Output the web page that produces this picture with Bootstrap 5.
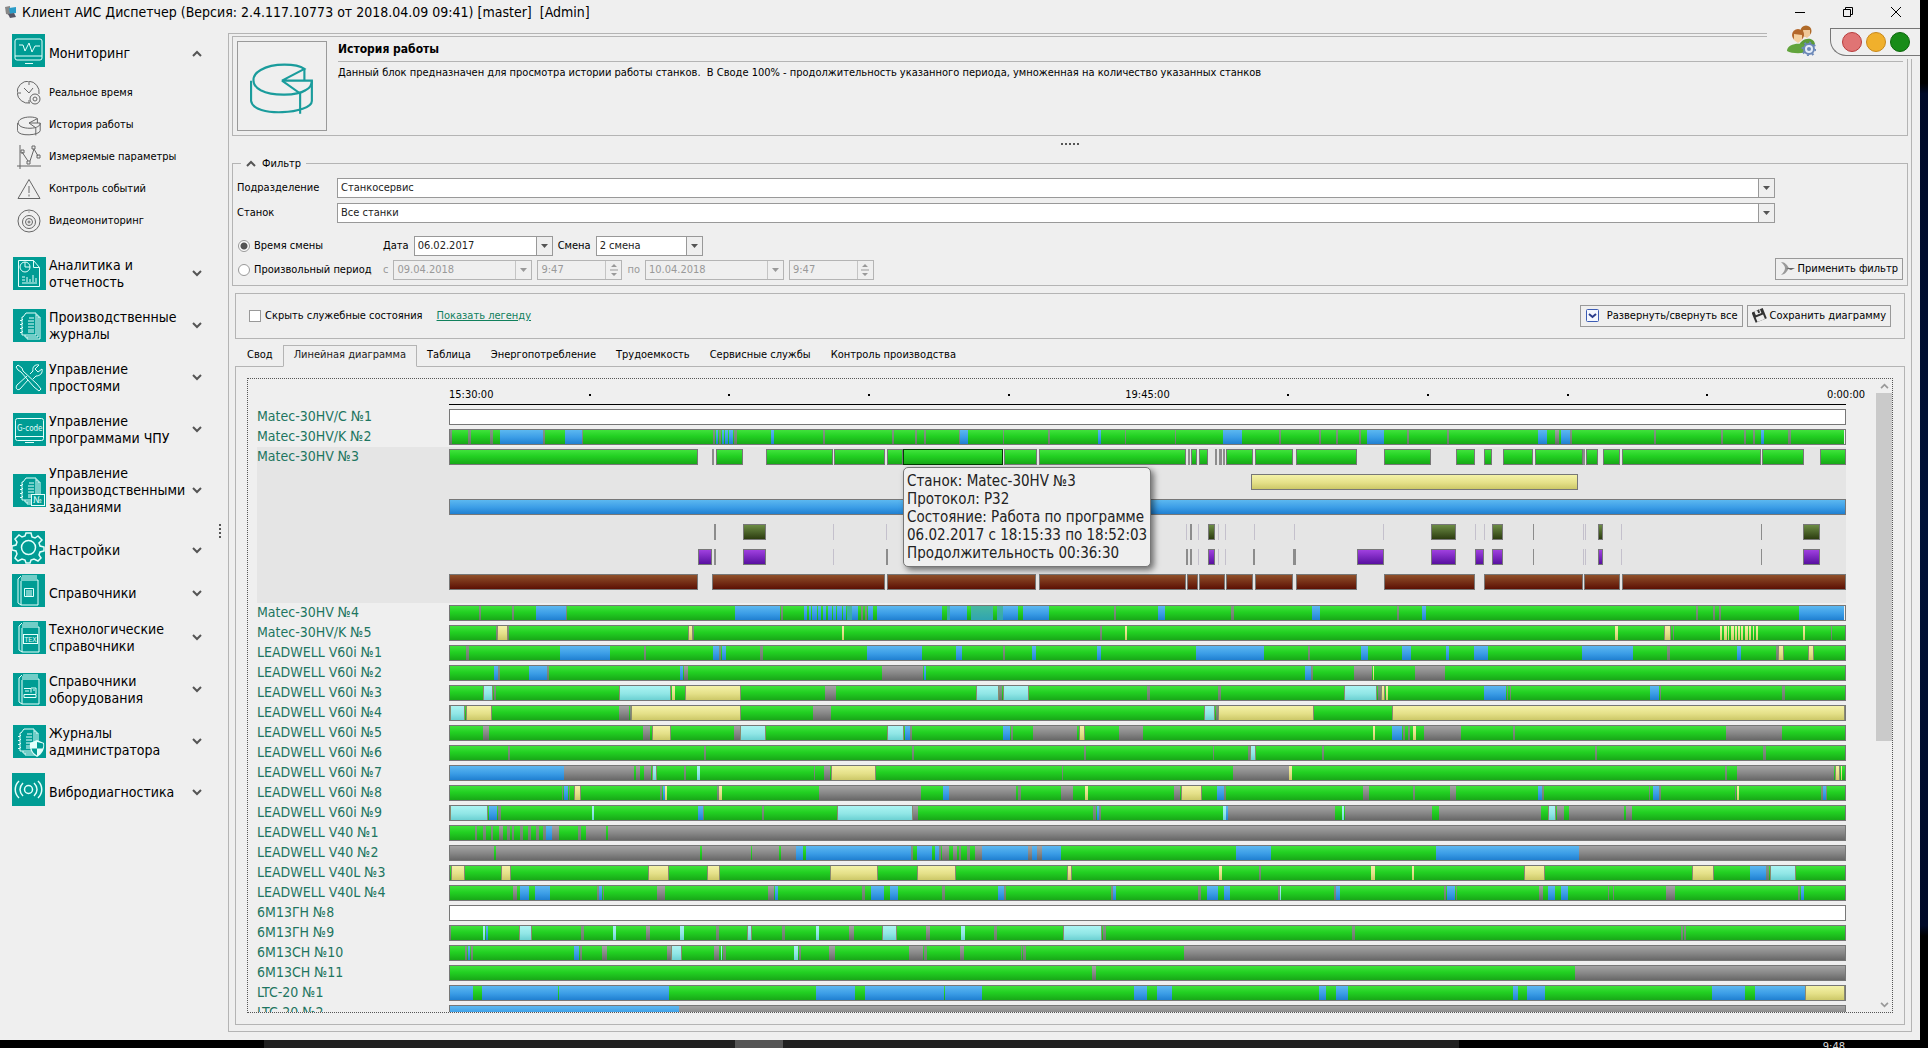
<!DOCTYPE html>
<html lang="ru">
<head>
<meta charset="utf-8">
<meta name="viewport" content="width=device-width, initial-scale=1">
<title>Клиент АИС Диспетчер</title>
<link href="https://cdn.jsdelivr.net/npm/bootstrap@5.3.0/dist/css/bootstrap.min.css" rel="stylesheet">
<style>
  body { font: 11px/14px "DejaVu Sans Condensed", "Noto Sans", sans-serif; color: #000; background: #000; }
  .desk { background: linear-gradient(#000 0 8%, #000a28 9%, #001238 50%, #000a28 89%, #000 90%); padding-right: 8px; }
  .win { background: #efefef; }
  .titlebar { height: 24px; padding: 0 16px 0 4px; font-size: 14px; }
  .titlebar button { width: 16px; height: 16px; border: 0; background: none; padding: 0; }
  .titlebar svg, .ico svg, .sub svg { display: block; width: 100%; height: 100%; }
  .line { fill: none; stroke: currentColor; }

  .side { width: 228px; padding: 5px 0 0 12px; }
  .side a, .side button { color: #000; text-decoration: none; }
  .sec { min-height: 52px; width: 198px; border: 0; background: none; padding: 0 8px 0 1px; text-align: left; font-size: 14px; line-height: 17px; gap: 3px; }
  .sec-one { min-height: 43px; padding-left: 0; gap: 4px; }
  .sec-one .cap, .sec-one .chev { padding-top: 7px; }
  .sec-three { min-height: 70px; }
  .ico { width: 33px; height: 33px; background: #009c94; color: #e4fffb; flex: none; }
  .cap { flex: 1; white-space: nowrap; }
  .chev { width: 10px; color: #555; }
  .chev svg { width: 10px; height: 7px; display: block; }
  .subs { padding: 5px 0 11px 5px; }
  .sub { height: 32px; gap: 8px; }
  .sub span { width: 24px; height: 24px; color: #666; }

  .main { border: 1px solid #b4b4b4; margin: 9px 8px 8px 0; padding: 2px 3px 6px; }
  .box { border: 1px solid #b4b4b4; }
  .intro { padding: 4px; height: 100px; gap: 11px; }
  .thumb { width: 90px; height: 90px; color: #1a9c9c; border-color: #9a9a9a; padding: 12px; }
  .intro h1 { font-size: 12px; line-height: 16px; font-weight: 700; margin: 0; padding-bottom: 4px; border-bottom: 1px solid #b4b4b4; }
  .grip { height: 22px; color: #555; padding-top: 7px; gap: 2px; }
  .grip i { width: 2px; height: 2px; background: #555; }
  fieldset.filter { border: 1px solid #b4b4b4; padding: 8px 4px 5px; margin: 0; }
  .filter legend { float: none; width: auto; font-size: 11px; line-height: 12px; margin: 0 0 0 4px; padding: 0 5px; gap: 6px; }
  .wide { margin: 0 128px 5px 0; }
  .wide label { width: 100px; }
  .field { height: 20px; border: 1px solid #999; background: #fff; }
  .field select, .field input { appearance: none; border: 0; background: none; padding: 0 3px; width: 100%; min-width: 0; color: #222; font: inherit; outline: 0; opacity: 1; }
  .drop { width: 16px; flex: none; border-left: 1px solid #999; background: #efefef; color: #555; }
  .drop svg { width: 7px; height: 4px; }
  .drop .updown { width: 8px; height: 14px; }
  .off .field { background: #efefef; border-color: #b4b4b4; }
  .off .field input, .off .txt, .off .drop { color: #999; }
  .off .drop { border-color: #c4c4c4; }
  .f-date { width: 139px; } .f-time { width: 85px; } .f-shift { width: 107px; }
  .crit { gap: 5px; height: 20px; padding-left: 1px; }
  .mode { width: 140px; gap: 4px; white-space: nowrap; }
  .form-check-input.rd, .form-check-input.ck { margin: 0; width: 12px; height: 12px; float: none; border-color: #999; box-shadow: none; flex: none; }
  .form-check-input.rd:checked { background: radial-gradient(#555 0 3px, #fff 4px); border-color: #999; }
  .form-check-input.ck { border-radius: 0; }
  .btn.tool { height: 22px; padding: 0 4px; border: 1px solid #999; border-radius: 0; font-size: 11px; line-height: 14px; color: #000; gap: 3px; white-space: nowrap; }
  .tool svg { width: 15px; height: 15px; }
  .bar-tools { margin: 7px 3px 6px; padding: 0 13px; height: 47px; }
  .legend-link { color: #10805c; margin-left: 14px; }
  .pages { margin: 0 3px; }
  .nav-tabs.pg { border-color: #b4b4b4; padding-left: 2px; }
  .pg .nav-link { padding: 2px 9px 4px; border-radius: 0; color: #000; line-height: 14px; white-space: nowrap; }
  .pg .nav-link.active { background: #efefef; border-color: #b4b4b4 #b4b4b4 #efefef; color: #222; padding: 2px 10px 4px; }
  .page { border: 1px solid #b4b4b4; border-top: 0; padding: 11px; }
  .plot { border: 1px dotted #555; overflow: hidden; }
  .rows { margin-right: -22px; padding: 0 52px 0 9px; overflow: hidden; }
  .axis { height: 26px; margin: 0 0 2px 192px; border-bottom: 1px solid #000; }
  .axis span { position: absolute; top: 9px; }
  .axis .tick { width: 2px; height: 2px; top: 15px; background: #000; }
  .axis .mid, .axis .fin { transform: translateX(-50%); }
  .mrow { height: 20px; }
  .mrow.open { height: 156px; background: #e5e5e5; }
  .mname { width: 192px; flex: none; font-size: 14px; line-height: 18px; color: #1d7560; white-space: nowrap; }
  .strip { height: 16px; margin: 2px 0 9px; display: flex; }
  .full { border: 1px solid #777; }
  .strip i { flex: none; }
  .parts i:not(.none) { border: 1px solid #777; }
  .g { background: linear-gradient(#40e23c, #22d022 45%, #18a818); }
  .b { background: linear-gradient(#5cb8f0, #3a9ce6 55%, #2080d0); }
  .x { background: linear-gradient(#a4a4a4, #888 50%, #686868); }
  .y { background: linear-gradient(#f4f2a8, #e4e088 55%, #ccc868); }
  .c { background: linear-gradient(#acf4f2, #90e6e6 55%, #6cd0d2); }
  .t { background: linear-gradient(#48b8a0, #2fa4b0); }
  .w { background: #fff; }
  .o { background: linear-gradient(#6c8c44, #2c3c10); }
  .p { background: linear-gradient(#a040e0, #5810a0); }
  .n { background: linear-gradient(#90502a, #5c1004); }
  .full .edged { box-shadow: inset 1px 0 #8a8a70, inset -1px 0 #8a8a70; }
  .full .x.slim { background: linear-gradient(#869886, #7c887c 50%, #6a746a); }
  .parts i.sel { border-color: #002800; outline: 1px solid #033803; outline-offset: -1px; }
  .parts i.v { border: 0; background: #8c8c8c; }
  .parts i.f { border: 0; background: #c4c0cc; }
  .tipbox { position: absolute; left: 32.5%; top: 20px; z-index: 2; padding: 4px 3px; font-size: 15px; line-height: 18px; color: #222; background: #efefef; border: 1px solid #777; border-radius: 5px; box-shadow: 3px 3px 6px #0008; white-space: nowrap; }
  .scroll { width: 16px; flex: none; color: #999; }
  .scroll .thumbbar { height: 348px; background: #cacaca; }
  .scroll svg { width: 9px; height: 6px; }
  .corner { position: absolute; top: 25px; right: 0; width: 153px; height: 34px; background: #efefef; padding-left: 20px; }
  .corner .users { width: 29px; height: 31px; }
  .lamps { width: 90px; height: 28px; margin-top: 3px; border: 1px solid #777; border-right: 0; border-bottom-left-radius: 16px; gap: 4px; padding-left: 11px; }
  .lamps i { width: 20px; height: 20px; border-radius: 50%; border: 1px solid; }
  .lamps .stop { background: #e07474; border-color: #b83c3c; }
  .lamps .wait { background: #f0b02c; border-color: #c8881c; }
  .lamps .go { background: #188c18; border-color: #0c680c; }
  .vgrip { position: absolute; left: 219px; top: 524px; gap: 2px; }
  .vgrip i { width: 2px; height: 2px; background: #555; }
  .taskbar { height: 8px; overflow: hidden; background: linear-gradient(90deg, #000 0 264px, #202020 264px 735px, #555 735px 783px, #202020 783px 1459px, #000 1459px); color: #ddd; line-height: 14px; padding: 0 83px 0 0; }
  .minh { min-height: 0; min-width: 0; }
  .wincontrols { gap: 32px; }
</style>
</head>
<body class="vh-100 d-flex flex-column overflow-hidden">
<svg class="d-none" xmlns="http://www.w3.org/2000/svg">
  <symbol id="dn" viewBox="0 0 10 7"><path d="M1 1l4 4 4-4" fill="none" stroke="currentColor" stroke-width="2"/></symbol>
  <symbol id="up" viewBox="0 0 10 7"><path d="M1 6l4-4 4 4" fill="none" stroke="currentColor" stroke-width="2"/></symbol>
  <symbol id="tri" viewBox="0 0 7 4"><path d="M0 0h7L3.500 4z" fill="currentColor"/></symbol>
  <symbol id="updn" viewBox="0 0 8 14"><path d="M4 1l3 3H1zM4 13l3-3H1z" fill="currentColor"/><path d="M0 7h8" stroke="currentColor"/></symbol>
  <symbol id="pie" viewBox="0 0 60 60"><g class="line"><path d="M51 14C44 9 22 8 10 15c-9 5-9 14 0 19 12 6 34 5 42 0 4-2 6-5 6-9H30z"/><path d="M51 14v11M58 25v19c0 12-55 16-57 0V25M30 25l17 12v19"/></g></symbol>
  <symbol id="doc" viewBox="0 0 33 33"><g class="line"><path d="M10 8l3-4h10v22H9V8zM23 6h2v22H12v-2M25 8h2v22H14v-2M16 9h5M15 12h6M15 15h6M15 18h6M15 21h6M15 23h6"/><path d="M7 11l1 1 2-2M7 15l1 1 2-2M7 19l1 1 2-2M7 23l1 1 2-2"/></g></symbol>
  <symbol id="book" viewBox="0 0 33 33"><g class="line"><path d="M10 2h15M9 4h16M9 6h17v25H9l-3-2V5l3-3M9 7v24"/></g></symbol>
</svg>

<div class="desk flex-grow-1 d-flex minh">
<div class="win flex-grow-1 d-flex flex-column position-relative">
  <header class="titlebar d-flex align-items-center">
    <svg style="width:14px;height:14px" viewBox="0 0 14 14" class="me-1"><path d="M1 2l5-1v9l-4-1z" fill="#888"/><path d="M5 3l7-1v6l-6 1z" fill="#2a9cc8"/><path d="M4 9l6-1 2 4-6 1z" fill="#556"/></svg>
    <span class="me-auto">Клиент АИС Диспетчер (Версия: 2.4.117.10773 от 2018.04.09 09:41) [master]&nbsp; [Admin]</span>
    <div class="d-flex wincontrols">
      <button aria-label="Свернуть"><svg viewBox="0 0 16 16"><path class="line" d="M3 8.500h10"/></svg></button>
      <button aria-label="Развернуть"><svg viewBox="0 0 16 16"><path class="line" d="M3.500 5.500h7v7h-7zM5.500 5V3.500h7v7H11"/></svg></button>
      <button aria-label="Закрыть"><svg viewBox="0 0 16 16"><path class="line" d="M3 3l10 10M13 3L3 13"/></svg></button>
    </div>
  </header>

  <div class="d-flex flex-grow-1 minh">
    <nav class="side flex-shrink-0">
      <button class="sec sec-one d-flex align-items-center"><span class="ico"><svg viewBox="0 0 33 33"><g class="line"><rect x="3" y="5" width="27" height="21" rx="2"/><path d="M3 22h27M13 29.500h8M7 11h4l2 6 4-8 3 9 3-6h5"/></g></svg></span><span class="cap">Мониторинг</span><span class="chev"><svg><use href="#up"/></svg></span></button>
      <div class="subs">
        <a href="#" class="sub d-flex align-items-center"><span><svg viewBox="0 0 24 24"><g class="line"><path d="M13 22A11 11 0 1 1 22 13"/><path d="M7 7l5 5 4-5M12 1v3M1 12h3M12 19v3"/><circle cx="18" cy="18" r="5"/><circle cx="18" cy="18" r="2"/></g></svg></span>Реальное время</a>
        <a href="#" class="sub d-flex align-items-center"><span><svg stroke-width="2.500"><use href="#pie"/></svg></span>История работы</a>
        <a href="#" class="sub d-flex align-items-center"><span><svg viewBox="0 0 24 24"><g class="line"><path d="M3 0v24M0 21h24M5 7l6 9M13 16l4-12 4 7"/><path d="M4 5h3v3H4zM10 16h3v3h-3zM15 1h3v3h-3zM20 10h3v3h-3z"/></g></svg></span>Измеряемые параметры</a>
        <a href="#" class="sub d-flex align-items-center"><span><svg viewBox="0 0 24 24"><g class="line"><path d="M12 2.500L23 21.500H1zM12 9v7M12 17.500v2"/></g></svg></span>Контроль событий</a>
        <a href="#" class="sub d-flex align-items-center"><span><svg viewBox="0 0 24 24"><g class="line"><circle cx="12" cy="12" r="11"/><circle cx="12" cy="13" r="6.500"/><circle cx="12" cy="13" r="3.500"/><circle cx="12" cy="13" r="1"/><path d="M11.500 3h1"/></g></svg></span>Видеомониторинг</a>
      </div>
      <button class="sec d-flex align-items-center"><span class="ico"><svg viewBox="0 0 33 33"><g class="line"><path d="M5.500 3.500h15l6 7v19h-21zM20.500 3.500v7h6"/><circle cx="12" cy="10" r="5"/><path d="M12 5v5h5M9 26h15M9 23h3M9 20h3M14 25v-5M17 25v-3M20 25v-7M23 25v-4"/></g></svg></span><span class="cap">Аналитика и<br>отчетность</span><span class="chev"><svg><use href="#dn"/></svg></span></button>
      <button class="sec d-flex align-items-center"><span class="ico"><svg><use href="#doc"/></svg></span><span class="cap">Производственные<br>журналы</span><span class="chev"><svg><use href="#dn"/></svg></span></button>
      <button class="sec d-flex align-items-center"><span class="ico"><svg viewBox="0 0 33 33"><g class="line"><path d="M5 4l4 3 1 3 14 13 4 5-2 2-5-4L8 11 5 9 3 6zM15 19l-8 9c-3 2-5-1-3-4l10-9M17 13l3-3c-1-4 2-7 6-6l-4 4 3 3 4-3c1 4-2 7-6 7l-3 3"/></g></svg></span><span class="cap">Управление<br>простоями</span><span class="chev"><svg><use href="#dn"/></svg></span></button>
      <button class="sec d-flex align-items-center"><span class="ico"><svg viewBox="0 0 33 33"><g class="line"><rect x="2.500" y="5.500" width="28" height="22" rx="2"/><path d="M2 23.500h29M12 29.500h9"/></g><text x="4" y="18" fill="currentColor" style="font-size:8px">G-code</text></svg></span><span class="cap">Управление<br>программами ЧПУ</span><span class="chev"><svg><use href="#dn"/></svg></span></button>
      <button class="sec sec-three d-flex align-items-center"><span class="ico"><svg viewBox="0 0 33 33"><use href="#doc"/><rect x="18.500" y="20.500" width="13" height="11" fill="#009c94" stroke="currentColor"/><text x="20" y="29" fill="currentColor" style="font-size:9px">№</text></svg></span><span class="cap">Управление<br>производственными<br>заданиями</span><span class="chev"><svg><use href="#dn"/></svg></span></button>
      <button class="sec sec-one d-flex align-items-center"><span class="ico"><svg viewBox="0 0 33 33"><g class="line" stroke-width="1.500"><circle cx="16.500" cy="16.500" r="7"/><path d="M14 2h5l1 4 3 1 3-2 4 4-3 3 1 3 4 1v4l-4 1-1 3 2 3-3 3-4-2-3 1-1 3h-4l-1-3-3-1-4 2-3-3 2-4-1-3-4-1v-4l4-1 1-3-2-3 4-4 3 2 3-1z"/></g></svg></span><span class="cap">Настройки</span><span class="chev"><svg><use href="#dn"/></svg></span></button>
      <button class="sec sec-one d-flex align-items-center"><span class="ico"><svg viewBox="0 0 33 33"><use href="#book"/><path class="line" d="M12.500 14.500h9v8h-9zM14 17h6M14 19h6M14 21h6"/></svg></span><span class="cap">Справочники</span><span class="chev"><svg><use href="#dn"/></svg></span></button>
      <button class="sec d-flex align-items-center"><span class="ico"><svg viewBox="0 0 33 33"><use href="#book"/><rect class="line" x="10.500" y="13.500" width="14" height="9"/><text x="11.500" y="21" fill="currentColor" style="font-size:7px">TEX</text></svg></span><span class="cap">Технологические<br>справочники</span><span class="chev"><svg><use href="#dn"/></svg></span></button>
      <button class="sec d-flex align-items-center"><span class="ico"><svg viewBox="0 0 33 33"><use href="#book"/><path class="line" d="M11 15.500h7v4M12 18h4M11 24.500h12v-3H11zM18 15h5v6M20 17h2"/></svg></span><span class="cap">Справочники<br>оборудования</span><span class="chev"><svg><use href="#dn"/></svg></span></button>
      <button class="sec d-flex align-items-center"><span class="ico"><svg viewBox="0 0 33 33"><svg x="-2" width="33" height="33"><use href="#doc"/></svg><path d="M24 15l7 3c1 6-2 11-7 14-5-3-8-8-7-14z" fill="currentColor"/><path d="M24 17v6.500h5.500c1-2 1-3 .5-5zM24 23.500v7c-3-2-5-4-5.500-7z" fill="#009c94"/></svg></span><span class="cap">Журналы<br>администратора</span><span class="chev"><svg><use href="#dn"/></svg></span></button>
      <button class="sec sec-one d-flex align-items-center"><span class="ico"><svg viewBox="0 0 33 33"><g class="line" stroke-width="1.500"><circle cx="16.500" cy="16.500" r="4"/><path d="M11 10c-4 4-4 9 0 13M7 8c-5 5-5 12 0 17M22 10c4 4 4 9 0 13M26 8c5 5 5 12 0 17"/></g></svg></span><span class="cap">Вибродиагностика</span><span class="chev"><svg><use href="#dn"/></svg></span></button>
    </nav>

    <main class="main flex-grow-1 d-flex flex-column minh">
      <section class="box intro d-flex">
        <div class="box thumb flex-shrink-0"><svg width="64" height="64" stroke-width="2"><use href="#pie"/></svg></div>
        <div class="flex-grow-1">
          <h1>История работы</h1>
          <p class="m-0 pt-1">Данный блок предназначен для просмотра истории работы станков.&nbsp; В Своде 100% - продолжительность указанного периода, умноженная на количество указанных станков</p>
        </div>
      </section>
      <div class="grip d-flex justify-content-center"><i></i><i></i><i></i><i></i><i></i></div>

      <fieldset class="filter">
        <legend class="d-flex align-items-center"><span class="chev"><svg><use href="#up"/></svg></span>Фильтр</legend>
        <div class="wide d-flex align-items-center"><label for="dep">Подразделение</label><div class="field d-flex flex-grow-1"><select id="dep"><option>Станкосервис</option></select><span class="drop d-flex align-items-center justify-content-center"><svg><use href="#tri"/></svg></span></div></div>
        <div class="wide d-flex align-items-center"><label for="mach">Станок</label><div class="field d-flex flex-grow-1"><select id="mach"><option>Все станки</option></select><span class="drop d-flex align-items-center justify-content-center"><svg><use href="#tri"/></svg></span></div></div>
        <div class="d-flex align-items-end pt-2">
          <div class="me-auto">
            <div class="crit d-flex align-items-center mb-1">
              <label class="mode d-flex align-items-center"><input class="form-check-input rd" type="radio" name="mode" checked>Время смены</label>
              <label for="day">Дата</label><div class="field f-date d-flex"><input id="day" value="06.02.2017"><span class="drop d-flex align-items-center justify-content-center"><svg><use href="#tri"/></svg></span></div>
              <label for="shift">Смена</label><div class="field f-shift d-flex"><select id="shift"><option>2 смена</option></select><span class="drop d-flex align-items-center justify-content-center"><svg><use href="#tri"/></svg></span></div>
            </div>
            <div class="crit off d-flex align-items-center">
              <label class="mode d-flex align-items-center"><input class="form-check-input rd" type="radio" name="mode">Произвольный период</label>
              <label class="txt" for="d1">с</label><div class="field f-date d-flex"><input id="d1" value="09.04.2018" disabled><span class="drop d-flex align-items-center justify-content-center"><svg><use href="#tri"/></svg></span></div>
              <div class="field f-time d-flex"><input aria-label="Время начала" value="9:47" disabled><span class="drop d-flex align-items-center justify-content-center"><svg class="updown"><use href="#updn"/></svg></span></div>
              <label class="txt" for="d2">по</label><div class="field f-date d-flex"><input id="d2" value="10.04.2018" disabled><span class="drop d-flex align-items-center justify-content-center"><svg><use href="#tri"/></svg></span></div>
              <div class="field f-time d-flex"><input aria-label="Время окончания" value="9:47" disabled><span class="drop d-flex align-items-center justify-content-center"><svg class="updown"><use href="#updn"/></svg></span></div>
            </div>
          </div>
          <button class="btn tool d-flex align-items-center"><svg viewBox="0 0 15 15"><path d="M1 1c4 0 6 3 8 6-2 3-3 6-8 7 3-3 4-5 4-7S3 3 1 1z" fill="#999"/><path d="M6 7l9 0-4 2z" fill="#666"/></svg>Применить фильтр</button>
        </div>
      </fieldset>

      <section class="box bar-tools d-flex align-items-center">
        <label class="d-flex align-items-center gap-1"><input class="form-check-input ck" type="checkbox">Скрыть служебные состояния</label>
        <a href="#" class="legend-link me-auto">Показать легенду</a>
        <button class="btn tool d-flex align-items-center me-1"><svg viewBox="0 0 15 15" class="me-1"><rect x="1.500" y="1.500" width="12" height="12" rx="1" fill="#f4f8ff" stroke="#3c5cb4"/><path d="M4 6l3.500 3L11 6" fill="none" stroke="#2a3c8c" stroke-width="2"/></svg>Развернуть/свернуть все</button>
        <button class="btn tool d-flex align-items-center"><svg viewBox="0 0 15 15"><g transform="rotate(-22 7 7)"><rect x="1" y="2" width="12" height="11" fill="#333"/><path d="M4 2h6v4H4zM3 8h8v5H3z" fill="#eee"/><path d="M7 2h2v3H7z" fill="#333"/></g></svg>Сохранить диаграмму</button>
      </section>

      <section class="pages d-flex flex-column flex-grow-1 minh">
        <ul class="nav nav-tabs pg">
          <li class="nav-item"><a class="nav-link" href="#">Свод</a></li>
          <li class="nav-item"><a class="nav-link active" href="#">Линейная диаграмма</a></li>
          <li class="nav-item"><a class="nav-link" href="#">Таблица</a></li>
          <li class="nav-item"><a class="nav-link" href="#">Энергопотребление</a></li>
          <li class="nav-item"><a class="nav-link" href="#">Трудоемкость</a></li>
          <li class="nav-item"><a class="nav-link" href="#">Сервисные службы</a></li>
          <li class="nav-item"><a class="nav-link" href="#">Контроль производства</a></li>
        </ul>
        <div class="page flex-grow-1 d-flex minh">
          <div class="plot flex-grow-1 d-flex">
            <div class="rows flex-grow-1">
              <div class="axis position-relative" id="axis"></div>
              <div id="rows"></div>
            </div>
            <div class="scroll d-flex flex-column align-items-center">
              <svg class="my-1 flex-shrink-0"><use href="#up"/></svg>
              <div class="thumbbar w-100"></div>
              <svg class="mt-auto mb-1 flex-shrink-0"><use href="#dn"/></svg>
            </div>
          </div>
        </div>
      </section>
    </main>
  </div>

  <div class="vgrip d-flex flex-column"><i></i><i></i><i></i><i></i></div>
  <div class="corner d-flex">
    <svg class="users" viewBox="0 0 29 31"><circle cx="19" cy="6" r="5.500" fill="#b06a28"/><path d="M12 22c0-8 14-12 16-3l-3 4z" fill="#5c9c38"/><path d="M16 5h7v5l-3 3-3-2z" fill="#f0c898"/><circle cx="11" cy="10" r="6" fill="#b4682c"/><path d="M0 26c0-9 22-10 22 0-5 3-17 3-22 0z" fill="#62a43c"/><path d="M7 9l8 1v5l-4 3-4-3z" fill="#f4d0a0"/><circle cx="22" cy="24" r="5" fill="#e4ecf8" stroke="#6c88b8" stroke-width="2"/><circle cx="22" cy="24" r="6.500" fill="none" stroke="#6c88b8" stroke-width="2" stroke-dasharray="2 3"/><circle cx="22" cy="24" r="2" fill="#6c88b8"/></svg>
    <div class="lamps d-flex align-items-center ms-auto"><i class="stop"></i><i class="wait"></i><i class="go"></i></div>
  </div>
</div>
</div>
<footer class="taskbar text-end">9:48</footer>

<script src="https://cdn.jsdelivr.net/npm/bootstrap@5.3.0/dist/js/bootstrap.bundle.min.js"></script>
<script>
// Length of the shift on the data scale
const SPAN = 1397;

// Each entry: machine name, base state, list of "state start + length"
const machines = [
  ["Matec-30HV/C №1", "w", ""],
  ["Matec-30HV/K №2", "g", "x0+2 x18+3 x40+3 b50+43 x93+2 b115+17 x132+1 x263+2 b266+2 x269+2 b272+3 b276+3 b280+4 x285+3 b322+3 x374+2 x443+2 x466+2 x475+2 x510+1 b511+8 x554+1 x599+2 b649+3 x676+1 x726+1 b774+19 x831+2 x871+2 x888+2 x911+2 b919+17 x959+2 x999+2 b1090+9 x1107+4 b1113+9 x1122+2 x1206+2 x1273+2 x1296+2 x1306+2 b1314+3 x1341+3"],
  ["Matec-30HV №3", "open", [
    "g0+249 v263+2 g267+27 g317+67 g385+51 g438+16 s454+100 g555+33 g590+147 v739+2 g742+6 g750+9 v766+2 v770+3 v774+2 g777+27 g806+38 g847+61 g935+47 g1007+19 g1035+8 g1054+30 g1086+48 v1134+2 g1137+12 g1154+17 g1173+139 g1313+42 g1371+26",
    "y802+327",
    "b0+1397",
    "v265+2 o294+23 f384+1 f437+1 f737+1 v741+2 f749+1 o759+7 f769+1 f776+1 f805+1 f845+1 f934+1 o982+25 f1026+1 f1035+1 o1043+11 v1084+1 f1134+1 f1136+1 o1149+5 f1172+1 v1312+1 o1354+17",
    "p249+14 v265+2 p294+23 f384+1 v437+2 v737+2 v741+2 f749+1 p759+7 f769+1 f776+1 v804+2 v844+3 p908+27 p982+25 p1026+9 p1043+11 v1084+1 f1134+1 f1136+1 p1149+5 f1172+1 v1312+1 p1354+17",
    "n0+249 n263+173 n438+149 n590+147 n738+11 n750+26 n777+27 n806+38 n847+61 n935+91 n1035+99 n1135+36 n1173+224"
  ]],
  ["Matec-30HV №4", "g", "x29+2 x62+2 b86+30 x116+1 b285+46 x332+2 b355+3 b360+2 b363+5 b369+3 b374+3 b379+4 b384+3 b388+5 b394+3 t398+5 b403+6 x412+2 x416+2 b419+5 b428+65 t498+3 b501+17 t522+22 t548+6 b554+15 b574+26 x665+2 b709+7 x783+3 b864+8 x949+2 b974+4 x1248+2 x1265+2 x1271+2 b1352+45"],
  ["Matec-30HV/K №5", "g", "x46+1 y47+11 x58+1 y238+5 x243+1 y393+2 x651+2 y676+2 y1167+3 y1216+7 x1225+1 y1272+2 y1276+3 y1280+1 y1283+3 y1287+2 y1290+2 y1293+2 y1297+3 y1301+2 y1305+1 y1308+2 y1355+2 x1383+1"],
  ["LEADWELL V60i №1", "g", "x16+3 b110+50 x194+2 b263+6 x269+2 b272+4 x311+3 b418+55 b507+6 x554+2 b583+4 b648+4 b747+68 x859+2 b913+7 b954+9 b998+3 b1026+14 b1134+51 x1219+3 b1289+4 x1328+2 y1330+6 y1360+6"],
  ["LEADWELL V60i №2", "g", "b44+4 x48+2 b79+18 x97+2 b230+3 x234+4 x433+41 b475+2 b856+6 x862+2 x905+18 y924+1 x967+30"],
  ["LEADWELL V60i №3", "g", "c33+10 x44+2 c169+52 y222+3 y235+56 x376+11 c527+23 x550+3 c554+26 x698+3 x769+3 c895+33 x929+3 y932+5 y938+2 b1036+22 x1059+1 x1062+1 b1202+9 x1212+1 x1334+3"],
  ["LEADWELL V60i №4", "g", "c0+15 y16+26 x169+10 x180+1 y181+110 x364+18 c755+11 x767+2 y769+96 y943+454"],
  ["LEADWELL V60i №5", "g", "x33+6 x193+7 y202+19 x284+6 c290+27 c438+17 b456+5 x461+2 b554+7 x562+2 x584+44 y630+6 x670+24 y924+2 b944+10 x955+2 x960+2 y965+3 x976+37 x1065+2 x1278+56"],
  ["LEADWELL V60i №6", "g", "x58+2 x254+2 x463+2 x635+2 x764+1 x799+2 c801+6 x873+2 x1147+2 x1315+3"],
  ["LEADWELL V60i №7", "g", "b0+114 x114+70 x186+4 x194+7 c202+5 x234+2 c247+3 x365+1 x375+6 y382+45 x613+1 x784+56 y840+3 x1277+2 x1289+97 y1387+5 y1393+1"],
  ["LEADWELL V60i №8", "g", "x112+1 b114+4 x119+1 y124+7 x210+2 b213+2 y215+2 x267+2 y269+3 x370+102 b494+6 x500+67 x569+3 x612+12 y636+3 x725+6 y732+21 b768+7 x775+2 x915+6 x965+2 x1002+6 b1090+4 x1094+2 x1201+1 b1205+6 x1211+2 x1287+1 y1289+2 x1373+2 b1375+3 x1378+1"],
  ["LEADWELL V60i №9", "g", "c0+38 b39+8 x48+3 c142+2 b248+5 x253+1 x313+2 c388+76 x464+5 x644+3 b648+2 x650+2 c774+3 b777+2 x779+107 c893+3 x897+87 x991+102 c1100+8 x1109+7 x1121+55 x1178+6"],
  ["LEADWELL V40 №1", "x", "g0+25 g27+6 g36+5 g43+6 g53+4 g60+2 g64+6 g73+5 g81+5 g89+4 b96+6 g109+19 g131+5 g156+2"],
  ["LEADWELL V40 №2", "x", "g44+2 g250+2 g301+1 g330+2 b347+7 g354+3 b357+105 g464+4 b468+15 g483+3 b486+4 g492+1 g500+4 g508+2 g512+6 g521+5 b533+46 b583+5 b593+19 g612+175 b787+35 g822+166 b988+143"],
  ["LEADWELL V40L №3", "g", "y1+14 y51+10 y198+21 y257+13 y381+48 y468+39 y618+5 y770+3 x810+2 y922+4 y963+3 y1076+21 y1244+22 b1302+16 x1318+3 c1322+26"],
  ["LEADWELL V40L №4", "g", "x63+4 b70+9 b85+15 x147+2 b149+3 x153+1 x207+8 x319+6 b326+3 x413+3 b422+13 b441+8 x493+3 b549+6 x555+2 x662+2 b664+3 x749+3 b758+11 b775+6 x829+2 c831+1 x886+2 b888+4 x996+2 b999+8 x1008+1 x1091+4 b1100+7 b1113+7 x1160+1 x1165+1 x1218+9 x1350+2 b1353+3"],
  ["6М13ГН №8", "w", ""],
  ["6М13ГН №9", "g", "x0+1 c33+2 b36+2 c69+13 x131+3 c163+3 x196+4 c230+4 x267+3 c298+5 x333+3 c367+3 x400+5 c433+15 x477+4 c512+4 x545+3 c614+39 x654+3 x904+3 x1233+2 x1236+2"],
  ["6М13СН №10", "g", "x15+2 b18+2 x21+2 b124+5 x130+2 x152+5 x217+4 c221+11 x265+5 c272+1 x274+3 c345+4 x350+2 x380+6 x460+14 x475+3 x511+4 x572+1 x574+3 x735+662"],
  ["6М13СН №11", "g", "x643+4 x1127+270"],
  ["LTC-20 №1", "b", "g23+9 g108+1 g219+148 g406+10 g495+1 g533+152 g698+10 g723+147 g877+10 g899+166 g1070+9 g1097+167 g1297+10 y1357+40"],
  ["LTC-20 №2", "x", "b0+229"]
];

// Wide yellow and cyan states get an outline, marks of a few units are darker
function look(state, len) {
  if (state === "s") return "g sel";
  if ((state === "y" || state === "c") && len > 4) return state + " edged";
  if (state === "x" && len < 4) return "x slim";
  return state;
}

const cell = (state, len) => `<i class="${look(state, len)}" style="width:${(len / SPAN * 100).toFixed(3)}%"></i>`;

// Fill the stretches between the listed states with the base state
function strip(base, text, kind) {
  let at = 0, html = "";
  for (const m of text.matchAll(/([a-z])(\d+)\+(\d+)/g)) {
    const from = +m[2], len = +m[3];
    if (from > at) html += cell(base, from - at);
    html += cell(m[1], len);
    at = from + len;
  }
  if (at < SPAN) html += cell(base, SPAN - at);
  return `<div class="strip ${kind}">${html}</div>`;
}

const tip = `<div class="tipbox">Станок: Matec-30HV №3<br>Протокол: P32<br>Состояние: Работа по программе<br>06.02.2017 с 18:15:33 по 18:52:03<br>Продолжительность 00:36:30</div>`;

document.getElementById("rows").innerHTML = machines.map(([name, base, data]) => {
  const open = base === "open";
  const body = open ? data.map(t => strip("none", t, "parts")).join("") + tip : strip(base, data, "full");
  return `<div class="mrow d-flex ${open ? "open" : ""}"><div class="mname">${name}</div><div class="flex-grow-1 position-relative">${body}</div></div>`;
}).join("");

let axis = `<span>15:30:00</span><span class="mid" style="left:50%">19:45:00</span><span class="fin" style="left:100%">0:00:00</span>`;
for (let i = 1; i < 10; i++) if (i !== 5) axis += `<span class="tick" style="left:${i * 10}%"></span>`;
document.getElementById("axis").innerHTML = axis;
</script>
</body>
</html>
